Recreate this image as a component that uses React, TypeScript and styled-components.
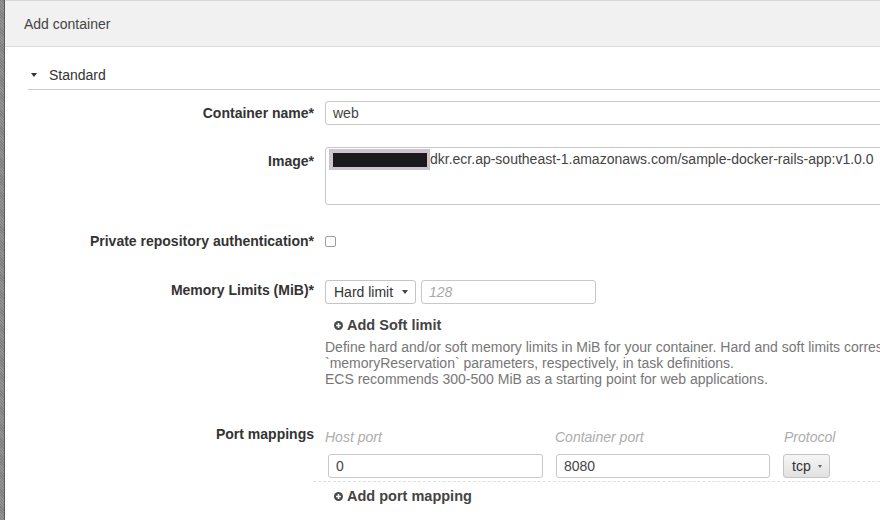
import React from "react";
import styled, { createGlobalStyle } from "styled-components";

const GlobalStyle = createGlobalStyle`
  html, body { margin: 0; padding: 0; }
  body {
    width: 880px;
    height: 520px;
    overflow: hidden;
    background: #8b8b8b;
    font-family: "Liberation Sans", Arial, Helvetica, sans-serif;
  }
`;

const Backdrop = styled.div`
  display: flex;
  height: 520px;
  padding-left: 4px;
  overflow: hidden;
  background: repeating-linear-gradient(
    45deg,
    #939393 0px,
    #939393 1px,
    #808080 1px,
    #808080 2px
  );
`;

const Modal = styled.div`
  flex: none;
  width: 1100px;
  background: #ffffff;
  border-left: 1px solid #5a5a5a;
`;

const Header = styled.div`
  height: 45px;
  display: flex;
  align-items: center;
  padding-left: 19px;
  background: #f1f1f1;
  border-top: 1px solid #dcd4dc;
  border-bottom: 1px solid #dadada;
  font-size: 14px;
  color: #444;
`;

const Body = styled.div`
  padding-left: 23px;
`;

const SectionToggle = styled.div`
  display: flex;
  align-items: center;
  padding: 19px 0 5px;
  line-height: 18px;
  font-size: 14px;
  color: #333;
  border-bottom: 1px solid #cccccc;
`;

const Caret = styled.span<{ $color?: string; $size?: number }>`
  display: inline-block;
  width: 0;
  height: 0;
  border-left: ${(p) => p.$size ?? 3.5}px solid transparent;
  border-right: ${(p) => p.$size ?? 3.5}px solid transparent;
  border-top: ${(p) => (p.$size ?? 3.5) + 0.5}px solid ${(p) => p.$color ?? "#333"};
`;

const ToggleCaret = styled(Caret)`
  margin: 0 12px 0 3px;
`;

const Row = styled.div<{ $mt: number }>`
  display: flex;
  align-items: flex-start;
  margin-top: ${(p) => p.$mt}px;
`;

const Label = styled.div<{ $lh?: number; $pt?: number; $shift?: number }>`
  flex: none;
  width: 286px;
  margin-right: 11px;
  text-align: right;
  font-weight: bold;
  font-size: 14px;
  color: #333;
  line-height: ${(p) => p.$lh ?? 18}px;
  padding-top: ${(p) => p.$pt ?? 0}px;
  margin-top: ${(p) => p.$shift ?? 0}px;
  white-space: nowrap;
`;

const Control = styled.div`
  flex: 1;
  min-width: 0;
`;

const TextInput = styled.div<{ $width?: number; $ml?: number; $placeholder?: boolean }>`
  box-sizing: border-box;
  height: 24px;
  width: ${(p) => (p.$width ? `${p.$width}px` : "100%")};
  margin-left: ${(p) => p.$ml ?? 0}px;
  padding: 0 7px;
  display: flex;
  align-items: center;
  border: 1px solid #c8c8c8;
  border-radius: 3px;
  background: #fff;
  font-size: 14px;
  color: ${(p) => (p.$placeholder ? "#a9a9a9" : "#444")};
  font-style: ${(p) => (p.$placeholder ? "italic" : "normal")};
`;

const ImageBox = styled.div`
  box-sizing: border-box;
  height: 58px;
  width: 100%;
  padding: 1px 3px;
  border: 1px solid #c8c8c8;
  border-radius: 3px;
  font-size: 14px;
  line-height: 21px;
  color: #444;
  white-space: nowrap;
`;

const Redacted = styled.span`
  display: inline-flex;
  align-items: center;
  justify-content: center;
  vertical-align: top;
  width: 101px;
  height: 21px;
  background: #cdc4cd;
  &::after {
    content: "";
    width: 94px;
    height: 14px;
    background: #1a1a1c;
  }
`;

const Checkbox = styled.span`
  display: block;
  box-sizing: border-box;
  width: 11px;
  height: 11px;
  margin-top: 4px;
  border: 1px solid #9c9c9c;
  border-radius: 2px;
  background: #fff;
`;

const InlineGroup = styled.div`
  display: flex;
  gap: 5px;
`;

const SelectButton = styled.div<{ $width: number; $gradient?: boolean; $ml?: number }>`
  box-sizing: border-box;
  height: 24px;
  width: ${(p) => p.$width}px;
  margin-left: ${(p) => p.$ml ?? 0}px;
  display: flex;
  align-items: center;
  justify-content: space-between;
  padding: 0 7px 0 8px;
  border: 1px solid #c4c4c4;
  border-radius: 3px;
  background: ${(p) => (p.$gradient ? "linear-gradient(#f6f6f6, #e1e1e1)" : "#fff")};
  font-size: 14px;
  color: #333;
`;

const AddLink = styled.div<{ $mt: number }>`
  display: flex;
  align-items: center;
  gap: 4px;
  margin-top: ${(p) => p.$mt}px;
  padding-left: 9px;
  line-height: 18px;
  font-size: 14.5px;
  font-weight: bold;
  color: #444;
`;

const Help = styled.div`
  margin-top: 5px;
  font-size: 14px;
  line-height: 16px;
  color: #777;
  white-space: nowrap;
`;

const PortWrap = styled.div`
  margin-left: -12px;
  padding: 0 0 3px 12px;
  border-bottom: 1px dashed #e0e0e0;
`;

const PortGrid = styled.div`
  display: grid;
  grid-template-columns: 230px 229px 120px;
  row-gap: 8px;
`;

const SubLabel = styled.div`
  font-size: 14px;
  line-height: 18px;
  font-style: italic;
  color: #adadad;
`;

const PlusIcon = () => (
  <svg width="9" height="9" viewBox="0 0 10 10">
    <circle cx="5" cy="5" r="5" fill="#4a4a4a" />
    <path d="M5 2.3v5.4M2.3 5h5.4" stroke="#fff" strokeWidth="1.8" />
  </svg>
);

export default function App() {
  return (
    <>
      <GlobalStyle />
      <Backdrop>
        <Modal>
          <Header>Add container</Header>
          <Body>
            <SectionToggle>
              <ToggleCaret />
              Standard
            </SectionToggle>

            <Row $mt={11}>
              <Label $lh={24}>Container name*</Label>
              <Control>
                <TextInput>web</TextInput>
              </Control>
            </Row>

            <Row $mt={22}>
              <Label $pt={5}>Image*</Label>
              <Control>
                <ImageBox>
                  <Redacted />
                  dkr.ecr.ap-southeast-1.amazonaws.com/sample-docker-rails-app:v1.0.0
                </ImageBox>
              </Control>
            </Row>

            <Row $mt={27}>
              <Label>Private repository authentication*</Label>
              <Control>
                <Checkbox />
              </Control>
            </Row>

            <Row $mt={30}>
              <Label $pt={1}>Memory Limits (MiB)*</Label>
              <Control>
                <InlineGroup>
                  <SelectButton $width={91}>
                    Hard limit <Caret $size={3.5} $color="#444" />
                  </SelectButton>
                  <TextInput $width={175} $placeholder>
                    128
                  </TextInput>
                </InlineGroup>
                <AddLink $mt={12}>
                  <PlusIcon />
                  Add Soft limit
                </AddLink>
                <Help>
                  Define hard and/or soft memory limits in MiB for your container. Hard and soft limits correspond to the `memory` and
                  <br />
                  `memoryReservation` parameters, respectively, in task definitions.
                  <br />
                  ECS recommends 300-500 MiB as a starting point for web applications.
                </Help>
              </Control>
            </Row>

            <Row $mt={41}>
              <Label $shift={-3}>Port mappings</Label>
              <Control>
                <PortWrap>
                  <PortGrid>
                    <SubLabel>Host port</SubLabel>
                    <SubLabel>Container port</SubLabel>
                    <SubLabel>Protocol</SubLabel>
                    <TextInput $width={215} $ml={3}>0</TextInput>
                    <TextInput $width={214} $ml={1}>8080</TextInput>
                    <SelectButton $width={47} $ml={-1} $gradient>
                      tcp <Caret $size={2.5} $color="#666" />
                    </SelectButton>
                  </PortGrid>
                </PortWrap>
                <AddLink $mt={5}>
                  <PlusIcon />
                  Add port mapping
                </AddLink>
              </Control>
            </Row>
          </Body>
        </Modal>
      </Backdrop>
    </>
  );
}
